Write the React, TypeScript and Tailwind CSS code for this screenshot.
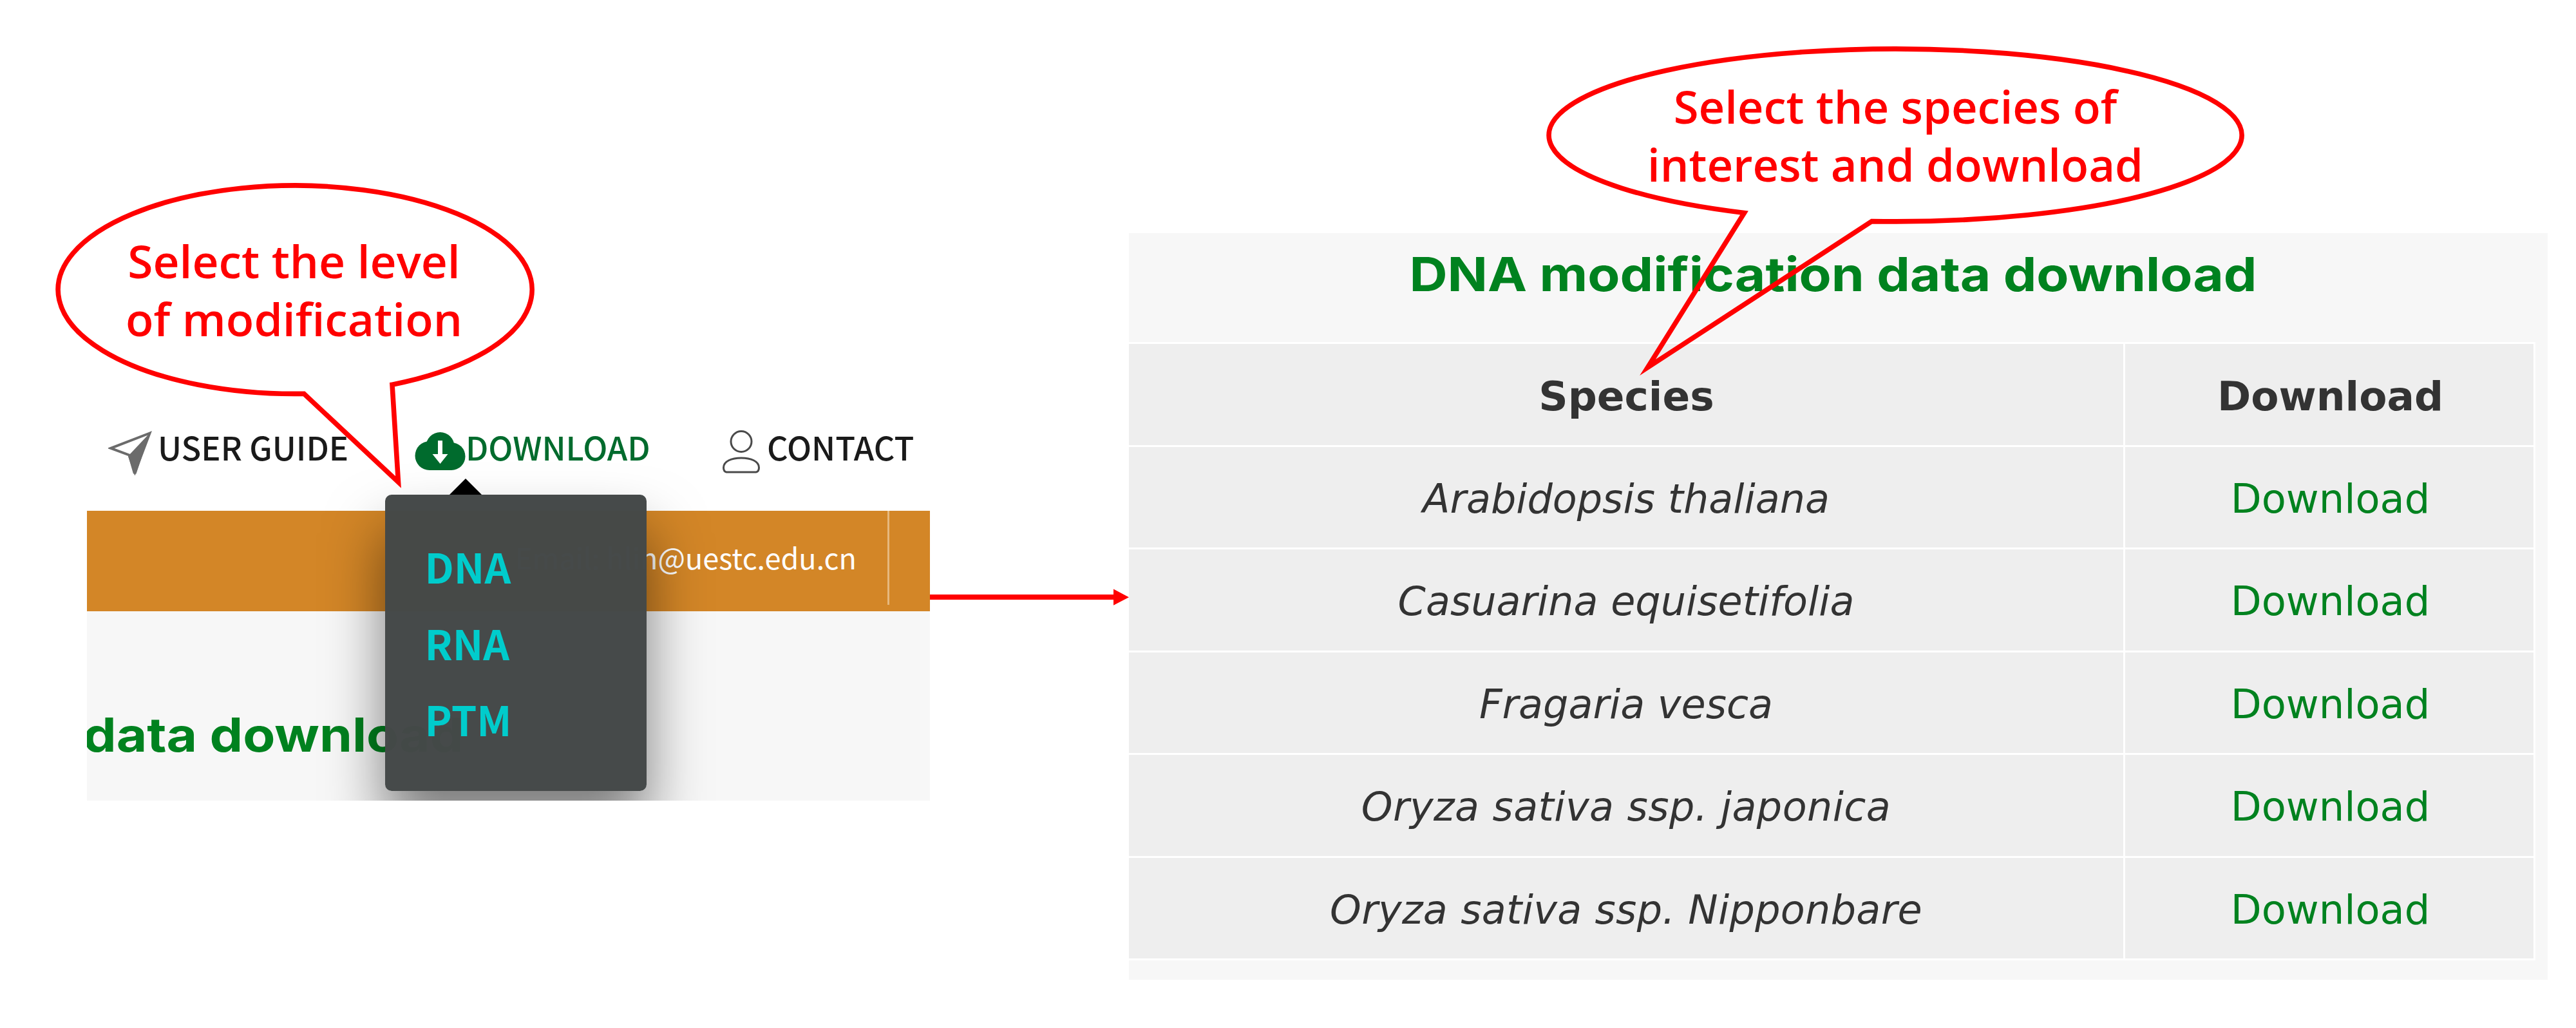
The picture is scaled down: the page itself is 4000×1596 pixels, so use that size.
const speciesList = [
  { name: 'Arabidopsis thaliana', tracking: '' },
  { name: 'Casuarina equisetifolia', tracking: '' },
  { name: 'Fragaria vesca', tracking: '' },
  { name: 'Oryza sativa ssp. japonica', tracking: 'tracking-[0.4px]' },
  { name: 'Oryza sativa ssp. Nipponbare', tracking: 'tracking-[0.3px]' },
];

const levels = ['DNA', 'RNA', 'PTM'];

function PlaneIcon() {
  return (
    <svg className="h-[70px] w-[68px] shrink-0" viewBox="168 668 68 70">
      <path d="M232.5 672.5 L172 695.8 L200.5 706.5 L209.5 733 Z" fill="#fff" stroke="#6b6b6b" strokeWidth="4" strokeLinejoin="miter" strokeMiterlimit="3" />
      <path d="M232.500 672.500 L199 708 L207 735.500 L211.500 735.500 Z" fill="#6b6b6b" />
    </svg>
  );
}

function CloudIcon() {
  return (
    <svg className="h-[60px] w-[79px] shrink-0" viewBox="644 671 79 60">
      <g fill="#006b2d">
        <circle cx="683.5" cy="693" r="22" />
        <circle cx="667" cy="707.500" r="22.5" />
        <circle cx="701" cy="708.500" r="21.5" />
        <rect x="667" y="700" width="34" height="30" />
      </g>
      <path d="M680 684 H687 V705 H695.500 L683.500 720 L671.500 705 H680 Z" fill="#fff" />
    </svg>
  );
}

function UserIcon() {
  return (
    <svg className="h-[70px] w-[64px] shrink-0" viewBox="1120 665 64 70" fill="none" stroke="#4a4a4a" strokeWidth="3">
      <circle cx="1152" cy="684.500" r="16" />
      <path d="M1129 732 Q1124.500 731 1124.500 725 C1124.500 715 1137 710 1152 710 C1167 710 1179.500 715 1179.500 725 Q1179.500 731 1175 732 Z" />
    </svg>
  );
}

function NavBar() {
  return (
    <nav className="flex h-[105px] items-center text-[50.6px] leading-none font-medium whitespace-nowrap text-[#1a1a1a]">
      <a className="ml-[33px] flex w-[475px] items-center">
        <span className="mt-5"><PlaneIcon /></span>
        <span className="mt-0.5 ml-[9px]">USER GUIDE</span>
      </a>
      <a className="flex w-[476px] items-center pl-px text-[#006b2d]">
        <span className="mt-4"><CloudIcon /></span>
        <span className="mt-0.5">DOWNLOAD</span>
      </a>
      <a className="flex items-center">
        <span className="mt-4"><UserIcon /></span>
        <span className="mt-0.5 ml-[8px]">CONTACT</span>
      </a>
    </nav>
  );
}

function LevelMenu() {
  return (
    <div className="absolute top-[127.5px] left-[462.5px] z-10 h-[460px] w-[406px] rounded-[10px] bg-[#444848]/99 pt-[52px] pl-[62px] shadow-[0_58px_90px_rgba(0,0,0,0.5)]">
      <svg className="absolute -top-[25px] left-[100px] h-[25px] w-[50px]" viewBox="0 0 50 25">
        <path d="M0 25 L25 0 L50 25 Z" fill="#000" />
      </svg>
      <ul>
        {levels.map((level) => (
          <li key={level} className="flex h-[118.7px] items-center text-[63.5px] leading-none font-bold text-[#00cccc]">
            {level}
          </li>
        ))}
      </ul>
    </div>
  );
}

function SitePanel() {
  return (
    <section className="relative mt-[640px] ml-[135px] h-[603px] w-[1309px] shrink-0 overflow-hidden font-['Noto_Sans_CJK_SC',sans-serif]">
      <NavBar />
      <div className="mt-12 flex h-[156px] justify-end bg-[#d38627] text-white">
        <div className="flex h-[146px] items-center border-r-[3px] border-[#e6b87e] pr-[48px] pb-[4px] text-[45px] leading-none">
          Email: hlin@uestc.edu.cn
        </div>
        <div className="w-[63px]" />
      </div>
      <div className="h-[294px] bg-[#f7f7f7] pt-[142px]">
        <p className="-ml-[6px] origin-left scale-x-[1.122] font-['Inter',sans-serif] text-[73px] leading-[100px] font-bold whitespace-nowrap text-[#00821f]">
          data download
        </p>
      </div>
      <LevelMenu />
    </section>
  );
}

function DownloadPanel() {
  return (
    <section className="mt-[362px] h-[1159px] w-[2203px] shrink-0 bg-[#f7f7f7] font-['DejaVu_Sans',sans-serif]">
      <h2 className="flex h-[169px] justify-center pt-[14px] font-['Inter',sans-serif] text-[73px] leading-[100px] font-bold whitespace-nowrap text-[#00821f]">
        <span className="mr-[16px] scale-x-[1.122]">DNA modification data download</span>
      </h2>
      <div className="w-[2184px] border-b-[3px] border-white text-center leading-none text-[#333]">
        <div className="flex h-[159.5px] text-[63px] font-bold">
          <div className="flex w-[1547px] items-center justify-center border-t-[3px] border-r-[3px] border-white bg-[#eee] pt-[6px] pl-px">Species</div>
          <div className="flex w-[637px] items-center justify-center border-t-[3px] border-r-[3px] border-white bg-[#eee] pt-[6px] pl-[3px]">Download</div>
        </div>
        {speciesList.map(({ name, tracking }) => (
          <div key={name} className="flex h-[159.5px] text-[62.3px]">
            <div className="flex w-[1547px] items-center justify-center border-t-[3px] border-r-[3px] border-white bg-[#eee] pt-[6px] text-[62px] italic">
              <span className={tracking}>{name}</span>
            </div>
            <div className="flex w-[637px] items-center justify-center border-t-[3px] border-r-[3px] border-white bg-[#eee] pt-[6px] pl-[3px] text-[#00821f]">
              <a>Download</a>
            </div>
          </div>
        ))}
      </div>
    </section>
  );
}

function FlowArrow() {
  return (
    <svg className="mt-[914px] h-[26px] w-[309px] shrink-0" viewBox="0 0 309 26">
      <path d="M0 9 H285 V0.500 L309 13.300 L285 25.700 V17 H0 Z" fill="#f00" />
    </svg>
  );
}

function LevelCallout() {
  return (
    <div className="absolute top-[280px] left-[80px] z-20 h-[490px] w-[756px] font-['Open_Sans',sans-serif]">
      <svg className="absolute inset-0 h-full w-full" viewBox="80 280 756 490">
        <path d="M472 611.300 A368 161.700 0 1 1 609 597.200 L618.500 748.500 Z" fill="none" stroke="#f00" strokeWidth="7.600" strokeMiterlimit="12" />
      </svg>
      <p className="relative pt-[80px] pr-[3px] text-center text-[71.3px] leading-[90px] font-semibold text-[#f00]">
        Select the level
        <br />
        of modification
      </p>
    </div>
  );
}

function SpeciesCallout() {
  return (
    <div className="absolute top-[65px] left-[2390px] z-20 h-[530px] w-[1106px] font-['Open_Sans',sans-serif]">
      <svg className="absolute inset-0 h-full w-full" viewBox="2390 65 1106 530">
        <path d="M2708.500 330.500 A538 134 0 1 1 2906.500 343.600 L2558.500 570.500 Z" fill="none" stroke="#f00" strokeWidth="7.600" strokeMiterlimit="12" />
      </svg>
      <p className="relative pt-[55px] text-center text-[70.6px] leading-[90px] font-semibold text-[#f00]">
        Select the species of
        <br />
        interest and download
      </p>
    </div>
  );
}

export default function App() {
  return (
    <main className="relative flex h-[1596px] w-[4000px] items-start overflow-hidden bg-white">
      <SitePanel />
      <FlowArrow />
      <DownloadPanel />
      <LevelCallout />
      <SpeciesCallout />
    </main>
  );
}
